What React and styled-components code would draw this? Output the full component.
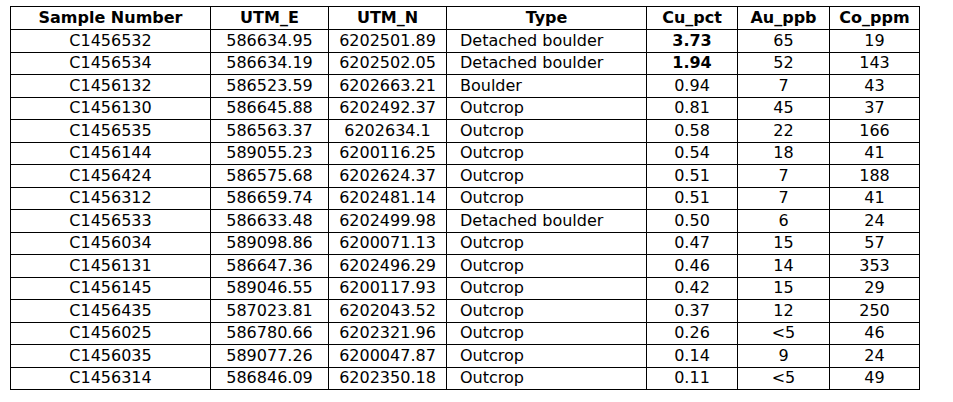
import React from "react";
import styled, { createGlobalStyle } from "styled-components";

const Global = createGlobalStyle`
  html, body { margin: 0; padding: 0; background: #ffffff; }
  body { font-family: Verdana, "DejaVu Sans", sans-serif; color: #000; }
`;

const Page = styled.div`
  padding: 6px 0 0 10px;
`;

const Grid = styled.div`
  display: grid;
  grid-template-columns: 200px 118px 118px 200px 91px 92px 90px;
  grid-template-rows: 23px;
  grid-auto-rows: 22.5px;
  width: max-content;
  border-left: 1px solid #000;
  border-top: 1px solid #000;
`;

const Cell = styled.div`
  box-sizing: border-box;
  border-right: 1px solid #000;
  border-bottom: 1px solid #000;
  display: flex;
  align-items: center;
  justify-content: ${(p) => (p.$left ? "flex-start" : "center")};
  padding-left: ${(p) => (p.$left ? "13px" : "0")};
  font-size: 16px;
  line-height: 1;
  white-space: nowrap;
  font-weight: ${(p) => (p.$bold ? 700 : 400)};
`;

const HeadCell = styled(Cell)`
  font-weight: 700;
`;

const headers = ["Sample Number", "UTM_E", "UTM_N", "Type", "Cu_pct", "Au_ppb", "Co_ppm"];

const rows = [
  ["C1456532", "586634.95", "6202501.89", "Detached boulder", "3.73", "65", "19", true],
  ["C1456534", "586634.19", "6202502.05", "Detached boulder", "1.94", "52", "143", true],
  ["C1456132", "586523.59", "6202663.21", "Boulder", "0.94", "7", "43"],
  ["C1456130", "586645.88", "6202492.37", "Outcrop", "0.81", "45", "37"],
  ["C1456535", "586563.37", "6202634.1", "Outcrop", "0.58", "22", "166"],
  ["C1456144", "589055.23", "6200116.25", "Outcrop", "0.54", "18", "41"],
  ["C1456424", "586575.68", "6202624.37", "Outcrop", "0.51", "7", "188"],
  ["C1456312", "586659.74", "6202481.14", "Outcrop", "0.51", "7", "41"],
  ["C1456533", "586633.48", "6202499.98", "Detached boulder", "0.50", "6", "24"],
  ["C1456034", "589098.86", "6200071.13", "Outcrop", "0.47", "15", "57"],
  ["C1456131", "586647.36", "6202496.29", "Outcrop", "0.46", "14", "353"],
  ["C1456145", "589046.55", "6200117.93", "Outcrop", "0.42", "15", "29"],
  ["C1456435", "587023.81", "6202043.52", "Outcrop", "0.37", "12", "250"],
  ["C1456025", "586780.66", "6202321.96", "Outcrop", "0.26", "<5", "46"],
  ["C1456035", "589077.26", "6200047.87", "Outcrop", "0.14", "9", "24"],
  ["C1456314", "586846.09", "6202350.18", "Outcrop", "0.11", "<5", "49"],
];

export default function App() {
  return (
    <Page>
      <Global />
      <Grid>
        {headers.map((h) => (
          <HeadCell key={h}>{h}</HeadCell>
        ))}
        {rows.map((r) => (
          <React.Fragment key={r[0]}>
            <Cell>{r[0]}</Cell>
            <Cell>{r[1]}</Cell>
            <Cell>{r[2]}</Cell>
            <Cell $left>{r[3]}</Cell>
            <Cell $bold={r[7]}>{r[4]}</Cell>
            <Cell>{r[5]}</Cell>
            <Cell>{r[6]}</Cell>
          </React.Fragment>
        ))}
      </Grid>
    </Page>
  );
}
